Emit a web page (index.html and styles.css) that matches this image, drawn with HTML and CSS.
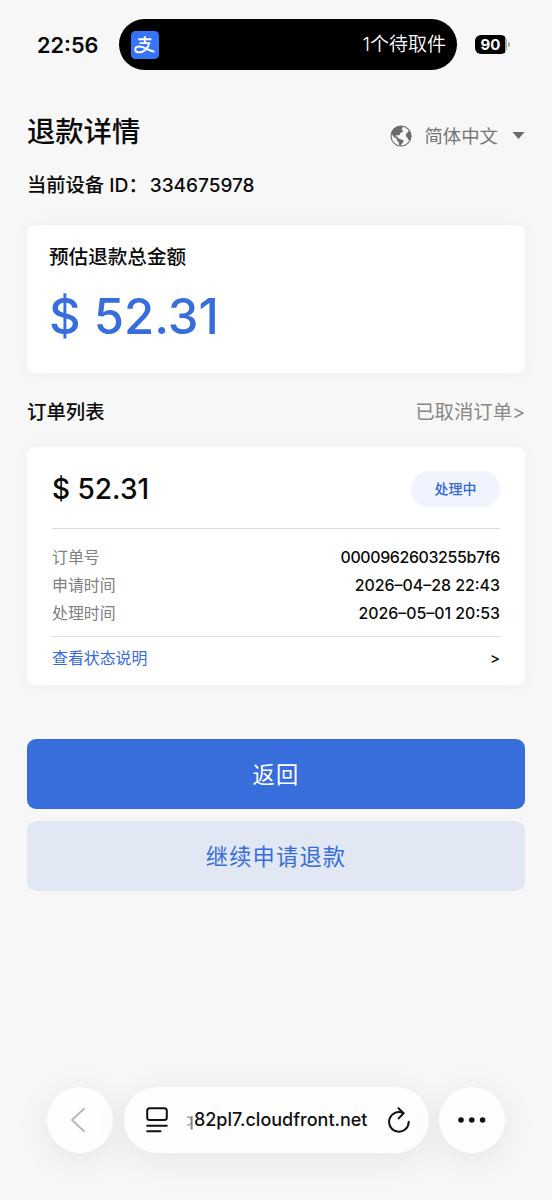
FILE: index.html
```html
<!DOCTYPE html>
<html lang="zh-CN">
<head>
<meta charset="utf-8">
<meta name="viewport" content="width=device-width, initial-scale=1">
<title>退款详情</title>
<link rel="stylesheet" href="styles.css">
</head>
<body>
<div class="screen">
  <header class="status">
    <span class="clock">22:56</span>
    <div class="island">
      <svg class="app-icon" viewBox="0 0 28 28" fill="none" stroke="#fff" stroke-linecap="butt">
        <rect width="28" height="28" rx="4.5" fill="#3574f6" stroke="none"/>
        <path d="M7.2 8.3H20.4M13.8 5V12M8.5 12.1H19.2" stroke-width="1.9"/>
        <path d="M18.3 12.3C17.2 16.6 12.9 21.3 8.5 21.3C5.8 21.3 4.3 20 4.3 18.4C4.3 16.8 5.7 15.6 8.2 15.6C12.7 15.6 17.2 19.4 23.4 20.8" stroke-width="2"/>
      </svg>
      <span class="pickup">1个待取件</span>
    </div>
    <div class="battery"><span class="battery-level">90</span><i class="battery-tip"></i></div>
  </header>

  <main class="content">
    <div class="heading">
      <h1 class="title">退款详情</h1>
      <div class="language">
        <svg class="globe" viewBox="0 0 22 22">
          <circle cx="11" cy="11" r="10" fill="none" stroke="#6b6b6b" stroke-width="1.1"/>
          <path fill="#6b6b6b" d="M1.6 7.4C3.4 3 7.6 .8 12.4 1.1L12.6 3L11.2 4.2L12.9 5.2L12.6 7L10.3 8L9.8 9.8L7.7 10.6L6.4 9.9L5.6 11.3L7.7 12L8.6 13.6L11.4 14.4L13.6 15.6L12.9 17.8L11.4 19L11 21C9.6 20.8 9 20.2 8.9 19.1L8.7 17L6.9 15.4L6.6 13.4L4.1 12.2L2 9.6Z"/>
          <path fill="#6b6b6b" d="M19.2 5.6C21.6 8.9 21.7 12.5 20.2 15.6L18.2 14.6L17.4 12.6L15.9 11.2L16.1 8.8L17.6 7.4Z"/>
        </svg>
        <span class="language-name">简体中文</span>
        <svg class="caret" viewBox="0 0 12 7"><path d="M0 0H12L6 7Z" fill="#6b6b6b"/></svg>
      </div>
    </div>
    <p class="device">当前设备 ID：<span class="device-id">334675978</span></p>

    <section class="card total">
      <h2 class="total-label">预估退款总金额</h2>
      <div class="total-amount">$ 52.31</div>
    </section>

    <div class="list-head">
      <h2 class="list-title">订单列表</h2>
      <a class="cancelled">已取消订单&gt;</a>
    </div>

    <section class="card order">
      <div class="order-top">
        <span class="order-amount">$ 52.31</span>
        <span class="badge">处理中</span>
      </div>
      <dl class="details">
        <div class="row"><dt>订单号</dt><dd class="order-no">0000962603255b7f6</dd></div>
        <div class="row"><dt>申请时间</dt><dd>2026–04–28 22:43</dd></div>
        <div class="row"><dt>处理时间</dt><dd>2026–05–01 20:53</dd></div>
      </dl>
      <a class="explain"><span>查看状态说明</span><span class="arrow">&gt;</span></a>
    </section>

    <div class="actions">
      <button class="button primary">返回</button>
      <button class="button secondary">继续申请退款</button>
    </div>
  </main>

  <nav class="browser">
    <button class="round" aria-label="后退">
      <svg class="back" viewBox="0 0 16 26" fill="none" stroke="#b9b9b9" stroke-width="1.9"><path d="M14.5 1.2L2 13L14.5 24.8"/></svg>
    </button>
    <div class="address">
      <svg class="reader" viewBox="0 0 22 26" fill="none" stroke="#111" stroke-width="2" stroke-linecap="round">
        <rect x="1.2" y="1.3" width="19.6" height="11.6" rx="2.5"/>
        <path d="M1.2 18.7H20.8M1.2 24.3H14.5"/>
      </svg>
      <div class="url"><span class="url-fade">q</span>82pl7.cloudfront.net</div>
      <svg class="reload" viewBox="0 0 22 26" fill="none" stroke="#111" stroke-width="2" stroke-linecap="round" stroke-linejoin="round">
        <path d="M20.7 14.8A9.8 9.8 0 1 1 15.2 6.1"/>
        <path d="M10.5 1.3L15.6 6.2L10.7 11.4"/>
      </svg>
    </div>
    <button class="round" aria-label="更多">
      <svg class="dots" viewBox="0 0 28 6" fill="#111"><circle cx="3" cy="3" r="2.8"/><circle cx="13.8" cy="3" r="2.8"/><circle cx="24.6" cy="3" r="2.8"/></svg>
    </button>
  </nav>
</div>
</body>
</html>
```
FILE: styles.css
```css
* { box-sizing: border-box; }

body {
  margin: 0;
  background: #f7f7f7;
  color: #0a0a0a;
  font-family: Inter, "Noto Sans CJK SC", sans-serif;
}

h1, h2, p, dl, dd { margin: 0; font-weight: 500; }
svg { display: block; flex: none; }
button { border: 0; padding: 0; font: inherit; }

.screen {
  width: 552px;
  height: 1200px;
  display: flex;
  flex-direction: column;
  overflow: hidden;
}

/* Status bar */
.status {
  height: 89px;
  padding: 0 41px 0 37px;
  display: flex;
  align-items: center;
}
.clock { width: 82px; flex: none; font-size: 21.7px; font-weight: 600; line-height: 28px; white-space: nowrap; }
.island {
  width: 338px;
  flex: none;
  height: 51px;
  padding: 0 11px 0 12px;
  border-radius: 26px;
  background: #000;
  color: #fff;
  display: flex;
  align-items: center;
  justify-content: space-between;
}
.app-icon { width: 28px; height: 28px; }
.pickup { font-size: 19px; font-weight: 350; line-height: 28px; white-space: nowrap; }
.battery { margin-left: 18px; display: flex; align-items: center; gap: 1px; }
.battery-level {
  width: 32px;
  height: 19px;
  border-radius: 6px;
  background: linear-gradient(90deg, #000 30px, #a8a8a8 30px);
  color: #fff;
  font-size: 15px;
  font-weight: 700;
  line-height: 19px;
  padding-right: 1px;
  text-align: center;
}
.battery-tip { width: 2px; height: 5px; border-radius: 0 2px 2px 0; background: #a8a8a8; }

/* Page */
.content { padding: 0 27px; }
.heading { height: 84px; display: flex; align-items: center; justify-content: space-between; }
.title { margin-top: 1px; font-size: 28.3px; line-height: 40px; }
.language { display: flex; align-items: center; margin-top: 9px; color: #757575; }
.globe { width: 22px; height: 22px; }
.language-name { margin: 0 14px 0 12px; font-size: 18.4px; line-height: 26px; }
.caret { width: 13px; height: 7px; }
.device { height: 26px; font-size: 19.3px; line-height: 25px; white-space: nowrap; }
.device-id { margin-left: 2px; font-size: 19px; }

.card {
  border-radius: 9px;
  background: #fff;
  box-shadow: 0 0 20px rgba(0, 0, 0, .035);
}
.total { height: 148px; margin-top: 26px; padding: 18px 22px; }
.total-label { font-size: 19.6px; line-height: 28px; }
.total-amount { margin-top: 16px; color: #386edb; font-size: 49px; font-weight: 500; line-height: 60px; }

.list-head { height: 74px; display: flex; align-items: center; justify-content: space-between; padding-top: 3px; }
.list-title { font-size: 19.4px; line-height: 28px; }
.cancelled { color: #888; font-size: 19.4px; line-height: 28px; }

.order { height: 238px; padding: 0 25px; }
.order-top {
  height: 82px;
  padding-top: 2px;
  border-bottom: 1px solid #dadada;
  display: flex;
  align-items: center;
  justify-content: space-between;
}
.order-amount { font-size: 28px; font-weight: 500; line-height: 36px; }
.badge {
  width: 89px;
  height: 36px;
  border-radius: 18px;
  background: #eff4ff;
  color: #3567d6;
  font-size: 14px;
  font-weight: 500;
  line-height: 35px;
  text-align: center;
}
.details { height: 108px; padding-top: 15px; border-bottom: 1px solid #e1e1e1; }
.row { height: 28px; display: flex; justify-content: space-between; font-size: 15.9px; line-height: 28px; }
.row dt { color: #808080; font-weight: 400; }
.order-no { letter-spacing: -.35px; }
.explain {
  height: 43px;
  padding-bottom: 2px;
  display: flex;
  align-items: center;
  justify-content: space-between;
  color: #386bd8;
  font-size: 15.9px;
}
.arrow { padding-top: 2px; color: #111; font-size: 15px; font-weight: 500; }

.actions { margin-top: 54px; display: flex; flex-direction: column; gap: 12px; }
.button { height: 70px; padding-bottom: 3px; border-radius: 9px; font-size: 22.2px; letter-spacing: 1.2px; }
.primary { background: #386edb; color: #fff; }
.secondary { background: #e1e7f3; color: #386edb; }

/* Browser toolbar */
.browser { margin: auto 47px 47px; display: flex; justify-content: space-between; }
.round, .address {
  height: 66px;
  border-radius: 33px;
  background: #fefefe;
  box-shadow: 0 6px 36px rgba(0, 0, 0, .075);
  display: flex;
  align-items: center;
}
.round { width: 66px; justify-content: center; }
.back { width: 16px; height: 26px; margin-right: 4px; }
.address { width: 305px; padding: 0 19px 0 22px; color: #111; }
.reader { width: 22px; height: 26px; }
.url { margin-left: 14px; width: 186px; font-size: 18px; font-weight: 500; line-height: 26px; display: flex; justify-content: flex-end; white-space: nowrap; }
.url-fade { color: transparent; background: linear-gradient(90deg, transparent 35%, #bbb 35%, #666); background-clip: text; }
.reload { width: 22px; height: 26px; margin-left: auto; }
.dots { width: 28px; height: 6px; }
```
